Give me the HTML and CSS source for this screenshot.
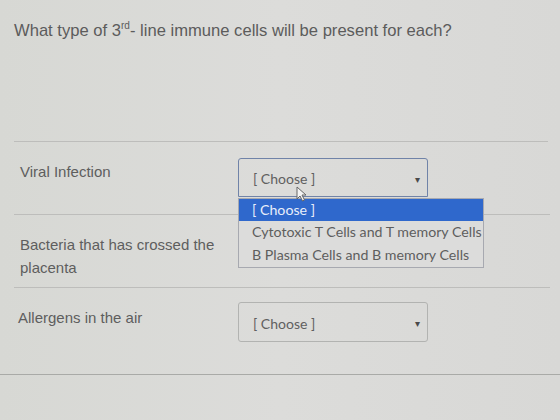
FILE: index.html
```html
<!DOCTYPE html>
<html>
<head>
<meta charset="utf-8">
<link rel="stylesheet" href="styles.css">
</head>
<body>
<div class="page">
  <div class="question">
    <p class="title">What type of 3<sup>rd</sup>- line immune cells will be present for each?</p>
  </div>
  <div class="row">
    <div class="label">Viral Infection</div>
    <div class="cell">
      <div class="select focused">
        <span>[ Choose ]</span>
        <span class="caret">&#9662;</span>
      </div>
      <ul class="menu">
        <li class="active">[ Choose ]</li>
        <li>Cytotoxic T Cells and T memory Cells</li>
        <li>B Plasma Cells and B memory Cells</li>
      </ul>
      <svg class="cursor" width="12" height="16" viewBox="0 0 12 16"><path d="M1 1 L1 13 L4 10 L6.5 15 L8.5 14 L6 9 L10 9 Z" fill="#f4f4f4" stroke="#666" stroke-width="1"/></svg>
    </div>
  </div>
  <div class="row">
    <div class="label">Bacteria that has crossed the placenta</div>
    <div class="cell"></div>
  </div>
  <div class="row last">
    <div class="label">Allergens in the air</div>
    <div class="cell">
      <div class="select">
        <span>[ Choose ]</span>
        <span class="caret">&#9662;</span>
      </div>
    </div>
  </div>
  <div class="footer"></div>
</div>
</body>
</html>
```

FILE: styles.css
```css
html, body {
  margin: 0;
  padding: 0;
}
body {
  background: linear-gradient(90deg, #d7d8d4 0%, #dcdcda 50%, #d8d8d6 100%);
  font-family: "Liberation Sans", Arial, sans-serif;
  color: #5a5a5a;
  width: 560px;
  height: 420px;
  overflow: hidden;
}
.page {
  display: flex;
  flex-direction: column;
}
.question {
  height: 141px;
  margin: 0 12px 0 14px;
  border-bottom: 1px solid #bdbdbb;
}
.title {
  margin: 0;
  padding-top: 21px;
  font-size: 16.6px;
  line-height: 20px;
  color: #5c5c5c;
}
.title sup {
  font-size: 10px;
  line-height: 0;
}
.row {
  display: flex;
  height: 72px;
  margin: 0 10px 0 14px;
  border-bottom: 1px solid #bdbdbb;
}
.row.last {
  height: 86px;
  margin: 0;
  padding-left: 14px;
  border-bottom: 1px solid #a9aaa7;
}
.label {
  width: 210px;
  padding: 18px 0 0 6px;
  font-size: 15px;
  line-height: 23px;
  color: #5e5e5e;
}
.row.last .label {
  width: 212px;
  padding-left: 4px;
  padding-top: 18px;
}
.cell {
  position: relative;
  padding-left: 8px;
}
.select {
  box-sizing: border-box;
  width: 190px;
  height: 39px;
  margin-top: 16px;
  border: 1px solid #b2b3b1;
  border-radius: 3px;
  display: flex;
  align-items: center;
  justify-content: space-between;
  padding: 2px 7px 0 14px;
  font-family: Lato, "Liberation Sans", sans-serif;
  font-size: 14px;
  color: #606060;
}
.select.focused {
  border-color: #7083a8;
  border-radius: 3px 3px 0 0;
}
.row.last .select {
  margin-top: 14px;
  height: 40px;
}
.caret {
  font-size: 10px;
  color: #4a4a4a;
}
.menu {
  position: absolute;
  left: 8px;
  top: 56px;
  margin: 0;
  padding: 0;
  list-style: none;
  width: 246px;
  box-sizing: border-box;
  border: 1px solid #a7a9b0;
  background: #dcdcdb;
  font-family: Lato, "Liberation Sans", sans-serif;
  font-size: 14.2px;
  color: #5e5e5e;
  z-index: 2;
}
.menu li {
  height: 22px;
  line-height: 22px;
  padding-left: 13px;
  white-space: nowrap;
}
.menu li + li {
  height: 23px;
}
.menu li.active {
  background: #2f68cc;
  color: #e8eefa;
}
.cursor {
  position: absolute;
  left: 66px;
  top: 44px;
  z-index: 3;
}
.footer {
  flex: 1;
  background: #d9d9d8;
}
```
